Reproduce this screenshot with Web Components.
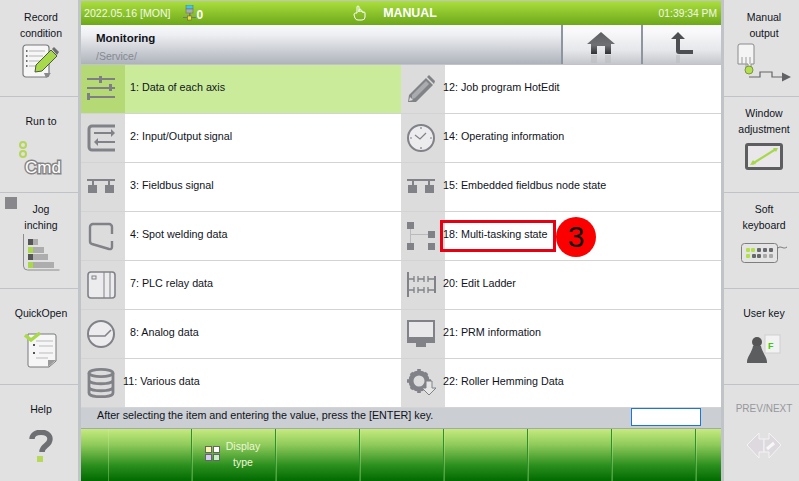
<!DOCTYPE html>
<html>
<head>
<meta charset="utf-8">
<style>
  html, body { margin: 0; padding: 0; width: 799px; height: 481px; overflow: hidden; background: #c0c4c8; }
  body { font-family: "Liberation Sans", Arial, sans-serif; font-size: 10.75px; color: #000; }
</style>
</head>
<body>
<hm-screen>
  <hm-side slot="left" style="--shift:4px">
    <hm-softkey label="Record condition" stack pad="9" gap="3" first>
      <svg width="38" height="35" viewBox="0 0 38 35">
        <rect x="1" y="1" width="26" height="32" rx="3" fill="#f6f6f6" stroke="#77797b" stroke-width="1.2"/>
        <path d="M7 7h16M7 12h14M7 17h11M7 22h7" stroke="#b4b4b4" stroke-width="1" fill="none"/>
        <path d="M4 7h1.5M4 12h1.5M4 17h1.5M4 22h1.5" stroke="#444" stroke-width="1.6"/>
        <path d="M22 29l7 0-5 5z" fill="#8a8a8a"/>
        <path d="M13 28l1-7 15-15 6 6-15 15z" fill="#a8d84c" stroke="#4d5a3a" stroke-width="1"/>
        <path d="M30 5l2-2 5 5-2 3z" fill="#6b6d70"/>
      </svg>
    </hm-softkey>
    <hm-softkey label="Run to" pad="16" gap="12">
      <svg width="46" height="36" viewBox="0 0 46 36">
        <circle cx="5" cy="4" r="3" fill="none" stroke="#b5d65a" stroke-width="2"/>
        <circle cx="5" cy="13" r="3" fill="none" stroke="#b5d65a" stroke-width="2"/>
        <text x="7" y="32" font-family="Liberation Sans, sans-serif" font-size="17" fill="#fff" stroke="#858585" stroke-width="3" paint-order="stroke">Cmd</text>
      </svg>
    </hm-softkey>
    <hm-softkey label="Jog inching" stack check pad="8" gap="0">
      <svg width="38" height="39" viewBox="0 0 38 39">
        <path d="M1.5 1v32a4 4 0 0 0 4 4h32" fill="none" stroke="#8c8c8c" stroke-width="1"/>
        <rect x="6" y="6" width="10" height="6" fill="#adadad"/><rect x="6" y="6" width="5" height="6" fill="#555"/>
        <rect x="6" y="14" width="16" height="6" fill="#adadad"/><rect x="6" y="14" width="5" height="6" fill="#a9d94b"/>
        <rect x="6" y="21" width="20" height="6" fill="#adadad"/><rect x="6" y="21" width="5" height="6" fill="#555"/>
        <rect x="6" y="29" width="26" height="6" fill="#adadad"/><rect x="6" y="29" width="5" height="6" fill="#a9d94b"/>
      </svg>
    </hm-softkey>
    <hm-softkey label="QuickOpen" pad="16" gap="11">
      <svg width="34" height="36" viewBox="0 0 34 36">
        <path d="M4 2h26a2 2 0 0 1 2 2v25l-7 6H6a2 2 0 0 1-2-2z" fill="#f6f6f6" stroke="#77797b"/>
        <path d="M12 9h17M15 14h14M15 21h14M12 26h12" stroke="#bbb"/>
        <path d="M9 13h2M9 21h2" stroke="#555" stroke-width="2"/>
        <path d="M24 35v-7h8z" fill="#9a9a9a"/>
        <path d="M1 3l6 5 9-7" fill="none" stroke="#a9d94b" stroke-width="3.4"/>
      </svg>
    </hm-softkey>
    <hm-softkey label="Help" pad="16" gap="13">
      <svg width="24" height="33" viewBox="0 0 24 33">
        <path d="M3 9c0-9 18-9 18 0 0 7-8 6-8 13" fill="none" stroke="#6d6f72" stroke-width="5.4"/>
        <rect x="8" y="26" width="6" height="6" fill="#b6d95a"/>
      </svg>
    </hm-softkey>
  </hm-side>

  <hm-titlebar slot="title" date="2022.05.16 [MON]" mode="MANUAL" time="01:39:34 PM"></hm-titlebar>

  <hm-pagehead slot="head" heading="Monitoring" path="/Service/">
    <hm-headbtn>
      <svg width="28" height="34" viewBox="0 0 28 34">
        <defs><linearGradient id="hg" x1="0" y1="0" x2="0" y2="1"><stop offset="0" stop-color="#5d5f63"/><stop offset=".6" stop-color="#6e7074"/><stop offset="1" stop-color="#2f3135"/></linearGradient></defs>
        <path d="M14 1L0 13h4v10h6v-8h8v8h6V13h4z" fill="url(#hg)"/>
        <path d="M4 24h6v8H4zM18 24h6v8h-6z" fill="#b9bbbe" opacity=".55"/>
      </svg>
    </hm-headbtn>
    <hm-headbtn>
      <svg width="24" height="34" viewBox="0 0 24 34">
        <path d="M8 1L1 8h5v12a3 3 0 0 0 3 3h14v-4H10V8h5z" fill="#4c4e52"/>
        <path d="M6 24h4v8H6z" fill="#b9bbbe" opacity=".55"/>
      </svg>
    </hm-headbtn>
  </hm-pagehead>

  <hm-menu slot="menu">
    <hm-menuitem label="1: Data of each axis" selected>
      <svg width="30" height="26" viewBox="0 0 30 26"><g fill="#7e7f85"><rect y="2" width="28" height="2"/><rect x="12" width="3" height="7"/><rect y="11" width="28" height="2"/><rect x="22" y="8" width="3" height="7"/><rect y="20" width="28" height="2"/><rect y="17" width="3" height="7"/></g></svg>
    </hm-menuitem>
    <hm-menuitem label="12: Job program HotEdit" tight>
      <svg width="30" height="30" viewBox="0 0 30 30"><path d="M2 21L19 4l7 7-17 17H1z" fill="#808285"/><path d="M20 3l2-2 6 6-1 3z" fill="#808285"/><path d="M5 21L19 7l3 3L8 24l-3 1z" fill="#a9abae"/><path d="M2 27l1-4 3 3z" fill="#dcdcdc"/></svg>
    </hm-menuitem>
    <hm-menuitem label="2: Input/Output signal">
      <svg width="30" height="30" viewBox="0 0 30 30"><g fill="none" stroke="#808288" stroke-width="2.2"><path d="M28 3H5a3 3 0 0 0-3 3v18a3 3 0 0 0 3 3h23" stroke-width="3"/><path d="M7 10h17M10 19h18"/></g><path d="M24 6l4 4-4 4zM11 15l-4 4 4 4z" fill="#808288"/></svg>
    </hm-menuitem>
    <hm-menuitem label="14: Operating information" tight>
      <svg width="30" height="30" viewBox="0 0 30 30"><circle cx="14" cy="15" r="13" fill="#ececee" stroke="#808288" stroke-width="2"/><path d="M14 4v2M14 24v2M3 15h2M23 15h2M8 12l5 4 6-6" fill="none" stroke="#808288" stroke-width="1.2"/></svg>
    </hm-menuitem>
    <hm-menuitem label="3: Fieldbus signal">
      <svg width="30" height="15" viewBox="0 0 30 15"><g fill="#808288"><rect y="0" width="28" height="2"/><rect x="5" y="2" width="2" height="4"/><rect x="21" y="2" width="2" height="4"/><rect x="1" y="6" width="9" height="8"/><rect x="18" y="6" width="9" height="8"/></g></svg>
    </hm-menuitem>
    <hm-menuitem label="15: Embedded fieldbus node state" tight>
      <svg width="30" height="15" viewBox="0 0 30 15"><g fill="#808288"><rect y="0" width="28" height="2"/><rect x="5" y="2" width="2" height="4"/><rect x="21" y="2" width="2" height="4"/><rect x="1" y="6" width="9" height="8"/><rect x="18" y="6" width="9" height="8"/></g></svg>
    </hm-menuitem>
    <hm-menuitem label="4: Spot welding data">
      <svg width="30" height="30" viewBox="0 0 30 30"><path d="M25 13V6a3 3 0 0 0-3-3H6a3 3 0 0 0-3 3v14a3 3 0 0 0 2 3l17 5c2 .5 3-.5 3-2v-6" fill="none" stroke="#808288" stroke-width="2.4"/></svg>
    </hm-menuitem>
    <hm-menuitem label="18: Multi-tasking state" tight>
      <svg width="30" height="28" viewBox="0 0 30 28"><path d="M3.5 6v15M3.5 12.5h21" stroke="#b9babd" stroke-width="1" fill="none"/><g fill="#808288"><rect width="7" height="7"/><rect x="21" y="9" width="7" height="7"/><rect y="21" width="7" height="7"/><rect x="21" y="21" width="7" height="7"/></g></svg>
    </hm-menuitem>
    <hm-menuitem label="7: PLC relay data">
      <svg width="30" height="30" viewBox="0 0 30 30"><rect x="1" y="2" width="27" height="26" rx="3" fill="#ececee" stroke="#808288" stroke-width="1.6"/><path d="M17 2v26M23 2v26" stroke="#808288"/><rect x="5" y="6" width="4" height="3" fill="none" stroke="#808288"/></svg>
    </hm-menuitem>
    <hm-menuitem label="20: Edit Ladder" tight>
      <svg width="30" height="27" viewBox="0 0 30 27"><g fill="none" stroke="#808288"><path d="M1 1v25M28 5v17" stroke-width="2"/><path d="M1 8h6M11 8h6M21 8h8M1 19h6M11 19h6M21 19h8M7 5v6M11 5v6M17 5v6M21 5v6M7 16v6M11 16v6M17 16v6M21 16v6" stroke-width="1.3"/></g></svg>
    </hm-menuitem>
    <hm-menuitem label="8: Analog data">
      <svg width="30" height="30" viewBox="0 0 30 30"><circle cx="14" cy="15" r="13" fill="#ececee" stroke="#808288" stroke-width="2"/><path d="M1 17h17l6-6" fill="none" stroke="#808288" stroke-width="1.6"/></svg>
    </hm-menuitem>
    <hm-menuitem label="21: PRM information" tight>
      <svg width="30" height="28" viewBox="0 0 30 28"><rect width="28" height="23" fill="#808288"/><rect x="2" y="2" width="24" height="15" fill="#e8e8ea"/><rect x="9" y="23" width="10" height="4" fill="#808288"/></svg>
    </hm-menuitem>
    <hm-menuitem label="11: Various data" shift>
      <svg width="30" height="30" viewBox="0 0 30 30"><g fill="none" stroke="#808288" stroke-width="2.8"><ellipse cx="14" cy="5" rx="12" ry="3.6"/><path d="M2 5v20c0 5 24 5 24 0V5M2 12c0 5 24 5 24 0M2 19c0 5 24 5 24 0"/></g></svg>
    </hm-menuitem>
    <hm-menuitem label="22: Roller Hemming Data" tight>
      <svg width="30" height="30" viewBox="0 0 30 30"><circle cx="12" cy="13" r="8" fill="none" stroke="#808288" stroke-width="5"/><path d="M12 1v4M12 21v4M0 13h4M20 13h4M4 5l3 3M17 18l3 3M4 21l3-3M17 8l3-3" stroke="#808288" stroke-width="3.6"/><path d="M19 13h6v7h4l-7 7-7-7h4z" fill="#e6e6e6" stroke="#808288"/></svg>
    </hm-menuitem>
    <hm-callout slot="over" number="3"></hm-callout>
  </hm-menu>

  <hm-statusbar slot="status" message="After selecting the item and entering the value, press the [ENTER] key."></hm-statusbar>

  <hm-funcbar slot="func">
    <hm-funckey plain></hm-funckey>
    <hm-funckey></hm-funckey>
    <hm-funckey label="Display type">
      <svg width="15" height="15" viewBox="0 0 15 15"><rect x=".5" y=".5" width="6" height="6" fill="#fcf7b0" stroke="#666"/><rect x="8.5" y=".5" width="6" height="6" fill="#fff" stroke="#666"/><rect x=".5" y="8.5" width="6" height="6" fill="#d4ccf4" stroke="#666"/><rect x="8.5" y="8.5" width="6" height="6" fill="#c5f0c5" stroke="#666"/></svg>
    </hm-funckey>
    <hm-funckey></hm-funckey>
    <hm-funckey></hm-funckey>
    <hm-funckey></hm-funckey>
    <hm-funckey></hm-funckey>
    <hm-funckey></hm-funckey>
    <hm-funckey></hm-funckey>
  </hm-funcbar>

  <hm-side slot="right" style="--shift:5px">
    <hm-softkey label="Manual output" stack pad="9" gap="2" first>
      <svg width="54" height="40" viewBox="0 0 54 40">
        <path d="M1 3a2 2 0 0 1 2-2h12a2 2 0 0 1 2 2v18h-3v6h-3v-6H1z" fill="#f4f4f4" stroke="#8a8a8a"/>
        <path d="M5 14v7M9 14v12M13 14v7" stroke="#9c9c9c"/>
        <path d="M12 34h11v-5h12v5h10" fill="none" stroke="#666" stroke-width="1.2"/>
        <circle cx="12" cy="27" r="4" fill="#b4e04e" stroke="#79954a"/>
        <path d="M45 29.500l9 4.500-9 4.500z" fill="#606266"/>
      </svg>
    </hm-softkey>
    <hm-softkey label="Window adjustment" stack pad="8" gap="6">
      <svg width="38" height="27" viewBox="0 0 38 27">
        <rect x="0" y="0" width="38" height="27" rx="3" fill="#5c5e60"/>
        <rect x="3" y="3" width="32" height="21" fill="#e9e7ea"/>
        <path d="M7 21L31 6" stroke="#a6d84a" stroke-width="2.2"/>
        <path d="M5 22l3-5 3 4zM33 5l-5 0 3 4z" fill="#a6d84a"/>
      </svg>
    </hm-softkey>
    <hm-softkey label="Soft keyboard" stack pad="8" gap="10">
      <svg width="46" height="20" viewBox="0 0 46 20">
        <rect x=".5" y=".5" width="36" height="19" rx="3" fill="#e4e4e4" stroke="#7e7e7e"/>
        <g fill="#b2e04a"><rect x="5" y="5" width="4" height="4" rx="1"/><rect x="10" y="5" width="4" height="4" rx="1"/><rect x="5" y="11" width="4" height="4" rx="1"/></g>
        <g fill="#66686b"><rect x="16" y="5" width="4" height="4" rx="1"/><rect x="22" y="5" width="4" height="4" rx="1"/><rect x="28" y="5" width="4" height="4" rx="1"/><rect x="11" y="11" width="4" height="4" rx="1"/><rect x="16" y="11" width="4" height="4" rx="1"/></g>
        <g fill="#a8a8a8"><rect x="22" y="11" width="4" height="4" rx="1"/><rect x="28" y="11" width="4" height="4" rx="1"/></g>
        <path d="M37 5c3-3 5 2 9-1" fill="none" stroke="#777"/>
      </svg>
    </hm-softkey>
    <hm-softkey label="User key" pad="16" gap="13">
      <svg width="34" height="30" viewBox="0 0 34 30">
        <rect x="18" y="1" width="15" height="18" fill="#f2f2f2" stroke="#d0d0d0"/>
        <text x="21" y="15" font-family="Liberation Sans, sans-serif" font-size="9" font-weight="700" fill="#3ecb00">F</text>
        <circle cx="10" cy="8" r="5" fill="#555"/>
        <path d="M6 12h8c1 6 6 11 6 16v1H0v-1c0-5 5-10 6-16z" fill="#5c5d5f"/>
      </svg>
    </hm-softkey>
    <hm-softkey label="PREV/NEXT" pad="16" gap="15" muted>
      <svg width="36" height="26" viewBox="0 0 36 26">
        <path d="M13 1v6h5v13h-5v6L1 13z" fill="#ddd9df" stroke="#f3f3f3"/>
        <path d="M23 1v6h-5v13h5v6l12-13z" fill="#ddd9df" stroke="#f3f3f3"/>
        <path d="M21 17l7-6" stroke="#f7f7f7" stroke-width="3"/>
      </svg>
    </hm-softkey>
  </hm-side>
</hm-screen>

<script>
function shell(css, html) {
  const t = document.createElement("template");
  t.innerHTML = `<style>${css}</style>${html}`;
  return t;
}

class HmElement extends HTMLElement {
  constructor() {
    super();
    this.attachShadow({ mode: "open" }).appendChild(this.constructor.template.content.cloneNode(true));
  }
  fill(selector, value) {
    this.shadowRoot.querySelector(selector).textContent = value;
  }
}

class HmScreen extends HmElement {
  static template = shell(`
    :host { display: grid; width: 799px; height: 481px; grid-template-columns: 78px 3px 640px 3px 75px;
            grid-template-rows: 1px 24px 39px 1px 340px 24px 52px; background: #c0c4c8; }
    .left { grid-column: 1; grid-row: 1 / -1; }
    .right { grid-column: 5; grid-row: 1 / -1; }
    .c { grid-column: 3; }
    .title { grid-row: 2; } .head { grid-row: 3; } .menu { grid-row: 5; } .status { grid-row: 6; } .func { grid-row: 7; }
  `, `
    <div class="left"><slot name="left"></slot></div>
    <div class="c title"><slot name="title"></slot></div>
    <div class="c head"><slot name="head"></slot></div>
    <div class="c menu"><slot name="menu"></slot></div>
    <div class="c status"><slot name="status"></slot></div>
    <div class="c func"><slot name="func"></slot></div>
    <div class="right"><slot name="right"></slot></div>
  `);
}

class HmSide extends HmElement {
  static template = shell(`
    :host { display: flex; flex-direction: column; height: 481px; background: #e1e1e1; }
  `, `<slot></slot>`);
}

class HmSoftkey extends HmElement {
  static template = shell(`
    :host { display: flex; flex: none; position: relative; height: 96px; box-sizing: border-box; flex-direction: column; align-items: center;
            border-bottom: 1px solid #bfc3c7; text-align: center; color: #10131c; line-height: 16px; font-size: 10.5px;
            padding-left: var(--shift, 0); }
    :host([first]) { height: 97px; }
    :host(:last-child) { border-bottom: 0; }
    :host([muted]) { color: #96989c; font-size: 10px; }
    .label { width: 70px; }
    :host([stack]) .label { word-spacing: 60px; }
    .icon { display: flex; justify-content: center; }
    .check { display: none; position: absolute; left: 5px; top: 4px; width: 12px; height: 12px; background: #88888c; }
    :host([check]) .check { display: block; }
  `, `<span class="check"></span><div class="label"></div><div class="icon"><slot></slot></div>`);
  connectedCallback() {
    this.fill(".label", this.getAttribute("label"));
    this.style.paddingTop = this.getAttribute("pad") + "px";
    this.shadowRoot.querySelector(".icon").style.marginTop = this.getAttribute("gap") + "px";
  }
}

class HmTitlebar extends HmElement {
  static template = shell(`
    :host { display: grid; grid-template-columns: 1fr auto 1fr; align-items: center; height: 24px; padding: 0 4px 0 3px; box-sizing: border-box;
            background: linear-gradient(#abdf3d, #6da81b); color: #f2f8e4; font-size: 10.6px; }
    .l { display: flex; align-items: center; gap: 12px; }
    .m { display: flex; align-items: center; gap: 17px; font-weight: 700; font-size: 12.4px; color: #fff; margin-right: 11px; }
    .r { text-align: right; font-size: 10.3px; }
    .zero { font-weight: 700; font-size: 12px; color: #fff; margin: 3px 0 0 1px; }
    .st { display: flex; align-items: center; }
  `, `
    <div class="l"><span class="date"></span>
      <span class="st"><svg width="13" height="16" viewBox="0 0 13 16"><rect x="3" y="0" width="7" height="4" fill="#3cc8e8" stroke="#666" stroke-width=".5"/><rect x="3" y="4" width="7" height="4" fill="#aaa" stroke="#666" stroke-width=".5"/><rect x="6" y="8" width="1.500" height="5" fill="#777"/><rect x="0" y="12" width="13" height="1" fill="#777"/><rect x="4.500" y="11" width="4" height="4" fill="#e8e23a" stroke="#555" stroke-width=".5"/></svg><span class="zero">0</span></span>
    </div>
    <div class="m">
      <svg width="13" height="16" viewBox="0 0 13 16"><path d="M4 8V2a1 1 0 0 1 2 0v5V5a1 1 0 0 1 2 0v2a1 1 0 0 1 2 0v1a1 1 0 0 1 2 0v4a3 3 0 0 1-3 3H5a3 3 0 0 1-3-2L1 10c0-2 1-2 3-2z" fill="none" stroke="#fff" stroke-width="1"/></svg>
      <span class="mode"></span>
    </div>
    <div class="r"><span class="time"></span></div>
  `);
  connectedCallback() {
    this.fill(".date", this.getAttribute("date"));
    this.fill(".mode", this.getAttribute("mode"));
    this.fill(".time", this.getAttribute("time"));
  }
}

class HmPagehead extends HmElement {
  static template = shell(`
    :host { display: flex; height: 39px; background: linear-gradient(#f8f9fb 0%, #eeeff2 25%, #aeb3bb 100%); }
    .t { flex: 1; padding: 6px 0 0 15px; }
    .h { font-weight: 700; font-size: 11.5px; line-height: 14px; color: #11131a; }
    .p { color: #858991; font-size: 10.5px; line-height: 12px; margin-top: 5px; }
    .b { display: flex; }
  `, `<div class="t"><div class="h"></div><div class="p"></div></div><div class="b"><slot></slot></div>`);
  connectedCallback() {
    this.fill(".h", this.getAttribute("heading"));
    this.fill(".p", this.getAttribute("path"));
  }
}

class HmHeadbtn extends HmElement {
  static template = shell(`
    :host { display: flex; width: 80px; height: 39px; box-sizing: border-box; align-items: flex-start; justify-content: center; padding: 6px 2px 0 0;
            border-left: 2px solid #8f95a0; background: linear-gradient(#f9f9fb 15%, #e6e7ea 65%, #c3c6cb); }
    :host(:last-child) { padding-right: 0; }
  `, `<slot></slot>`);
}

class HmMenu extends HmElement {
  static template = shell(`
    :host { display: block; position: relative; height: 340px; background: #fff; }
    .grid { display: grid; grid-template-columns: 320px 320px; grid-auto-rows: 49px; height: 343px; overflow: hidden; }
  `, `<div class="grid"><slot></slot></div><slot name="over"></slot>`);
}

class HmMenuitem extends HmElement {
  static template = shell(`
    :host { display: flex; align-items: stretch; height: 49px; box-sizing: border-box; border-bottom: 1px solid #d3d3d3; background: #fff; color: #10131c; }
    :host([selected]) { background: #c9eb9a; }
    .ic { flex: none; width: 44px; background: #dcdcdc; display: flex; align-items: center; justify-content: center; padding: 0 2px 1px 0; box-sizing: border-box; }
    :host([selected]) .ic { background: #b5da75; }
    .tx { display: flex; align-items: center; padding: 0 0 4px 5px; white-space: nowrap; position: relative; }
    :host([tight]) .tx { padding-left: 0; margin-left: -2px; }
    :host([shift]) .tx { margin-left: -7px; }
  `, `<div class="ic"><slot></slot></div><div class="tx"></div>`);
  connectedCallback() { this.fill(".tx", this.getAttribute("label")); }
}

class HmCallout extends HmElement {
  static template = shell(`
    :host { position: absolute; left: 359px; top: 155px; width: 156px; height: 33px; display: block; }
    .box { position: absolute; left: 0; top: 0; width: 116px; height: 32px; box-sizing: border-box; border: 3px solid #e60012; }
    .num { position: absolute; left: 116px; top: -3px; width: 40px; height: 40px; border-radius: 50%; background: #fa0000; color: #111;
           font-size: 30px; line-height: 40px; text-align: center; }
  `, `<div class="box"></div><div class="num"></div>`);
  connectedCallback() { this.fill(".num", this.getAttribute("number")); }
}

class HmStatusbar extends HmElement {
  static template = shell(`
    :host { display: flex; align-items: center; height: 24px; padding-left: 16px; box-sizing: border-box; background: #cbced3; color: #10131c; border-bottom: 1px solid #a4a8ad; }
    .m { flex: 1; padding-bottom: 4px; }
    input { width: 70px; height: 18px; box-sizing: border-box; border: 1px solid #1a78d0; background: #fff; margin: 0 20px 0 0; padding: 0; outline: 0; }
  `, `<div class="m"></div><input type="text" aria-label="value">`);
  connectedCallback() { this.fill(".m", this.getAttribute("message")); }
}

class HmFuncbar extends HmElement {
  static template = shell(`
    :host { display: grid; grid-template-columns: 27px repeat(7, 84px) 1fr; height: 52px; overflow: hidden; }
  `, `<slot></slot>`);
}

class HmFunckey extends HmElement {
  static template = shell(`
    :host { display: flex; align-items: center; justify-content: center; gap: 4px; box-sizing: border-box; height: 52px; padding-bottom: 3px;
            border-right: 1px solid #2f8f2a; box-shadow: inset 1px 0 0 rgba(200, 240, 160, .35);
            background: linear-gradient(#c6ea7e, #8fcb5c 30%, #2b8f1e 70%, #006a00); color: #eef7d6; line-height: 16px; font-size: 10.5px; }
    :host(:last-child) { border-right: 0; }
    :host([plain]) { border-right: 0; box-shadow: none; }
    .tx { text-align: center; width: 38px; }
    :host(:not([label])) .tx { display: none; }
  `, `<slot></slot><div class="tx"></div>`);
  connectedCallback() {
    const label = this.getAttribute("label");
    if (label) this.fill(".tx", label);
  }
}

customElements.define("hm-screen", HmScreen);
customElements.define("hm-side", HmSide);
customElements.define("hm-softkey", HmSoftkey);
customElements.define("hm-titlebar", HmTitlebar);
customElements.define("hm-pagehead", HmPagehead);
customElements.define("hm-headbtn", HmHeadbtn);
customElements.define("hm-menu", HmMenu);
customElements.define("hm-menuitem", HmMenuitem);
customElements.define("hm-callout", HmCallout);
customElements.define("hm-statusbar", HmStatusbar);
customElements.define("hm-funcbar", HmFuncbar);
customElements.define("hm-funckey", HmFunckey);
</script>
</body>
</html>
